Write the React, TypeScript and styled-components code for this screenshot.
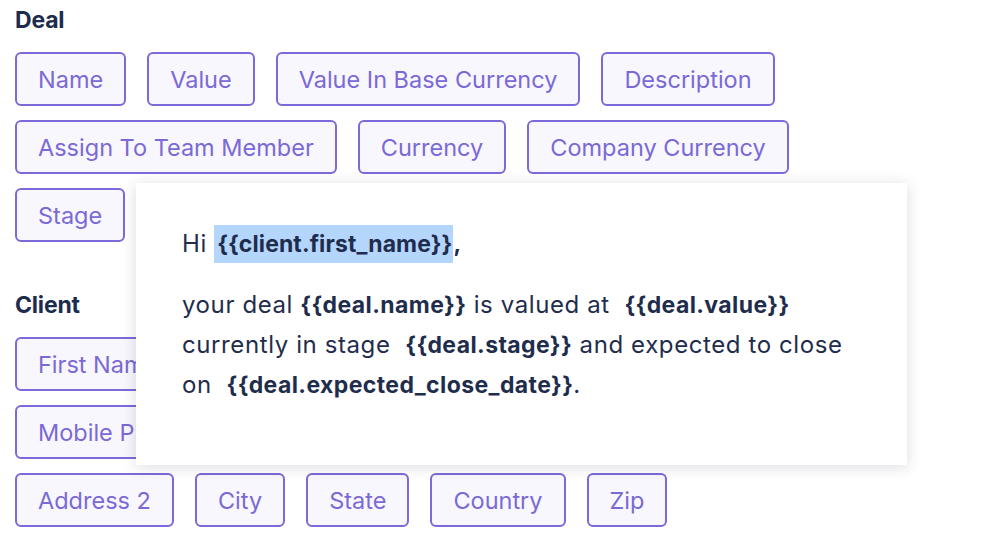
import React from "react";
import styled, { createGlobalStyle } from "styled-components";

const Global = createGlobalStyle`
  html, body { margin: 0; padding: 0; background: #ffffff; }
  body { font-family: Inter, "Open Sans", sans-serif; width: 1000px; height: 540px; overflow: hidden; }
`;

const Page = styled.div`
  position: relative;
  width: 1000px;
  height: 540px;
  padding: 5px 15px 0 15px;
  box-sizing: border-box;
`;

const Section = styled.section<{ $gapTop?: number }>`
  display: flex;
  flex-direction: column;
  margin-top: ${(p) => p.$gapTop ?? 0}px;
`;

const Heading = styled.h2`
  margin: 0 0 16px 0;
  font-size: 23px;
  line-height: 31px;
  font-weight: 700;
  letter-spacing: -0.2px;
  color: #1d2b4c;
`;

const Rows = styled.div`
  display: flex;
  flex-direction: column;
  gap: 14px;
`;

const Row = styled.div`
  display: flex;
  gap: 21px;
`;

const Chip = styled.div`
  height: 54px;
  box-sizing: border-box;
  padding: 0 21px;
  display: flex;
  align-items: center;
  border: 2px solid #7b6ad9;
  border-radius: 6px;
  background: #f8f7fd;
  color: #7a69d6;
  font-size: 23.5px;
  white-space: nowrap;
`;

const Popup = styled.div`
  position: absolute;
  left: 136px;
  top: 183px;
  width: 771px;
  height: 282px;
  box-sizing: border-box;
  background: #ffffff;
  box-shadow: 0 2px 14px rgba(30, 40, 70, 0.16);
  padding: 41px 46px 0 46px;
  color: #1f2d4d;
  font-size: 24px;
  letter-spacing: 0.6px;
`;

const Para = styled.p<{ $mb?: number }>`
  margin: 0 0 ${(p) => p.$mb ?? 0}px 0;
  line-height: 40px;
`;

const Var = styled.b`
  font-weight: 700;
  font-size: 23px;
  letter-spacing: 0.4px;
`;

const Highlight = styled(Var)`
  background: #b4d5fc;
  letter-spacing: 0.1px;
  padding: 5px 1px 5px 3px;
`;

const dealRows = [
  ["Name", "Value", "Value In Base Currency", "Description"],
  ["Assign To Team Member", "Currency", "Company Currency"],
  ["Stage"],
];

const clientRows = [
  ["First Name"],
  ["Mobile Phone"],
  ["Address 2", "City", "State", "Country", "Zip"],
];

function ChipRows({ rows }: { rows: string[][] }) {
  return (
    <Rows>
      {rows.map((r, i) => (
        <Row key={i}>
          {r.map((c) => (
            <Chip key={c}>{c}</Chip>
          ))}
        </Row>
      ))}
    </Rows>
  );
}

export default function App() {
  return (
    <>
      <Global />
      <Page>
        <Section>
          <Heading>Deal</Heading>
          <ChipRows rows={dealRows} />
        </Section>
        <Section $gapTop={48}>
          <Heading>Client</Heading>
          <ChipRows rows={clientRows} />
        </Section>
        <Popup>
          <Para $mb={21}>
            Hi <Highlight>{"{{client.first_name}}"}</Highlight>
            <Var>,</Var>
          </Para>
          <Para>
            your deal <Var>{"{{deal.name}}"}</Var> is valued at&nbsp; <Var>{"{{deal.value}}"}</Var>
            <br />
            currently in stage&nbsp; <Var>{"{{deal.stage}}"}</Var> and expected to close
            <br />
            on&nbsp; <Var>{"{{deal.expected_close_date}}"}</Var>.
          </Para>
        </Popup>
      </Page>
    </>
  );
}
